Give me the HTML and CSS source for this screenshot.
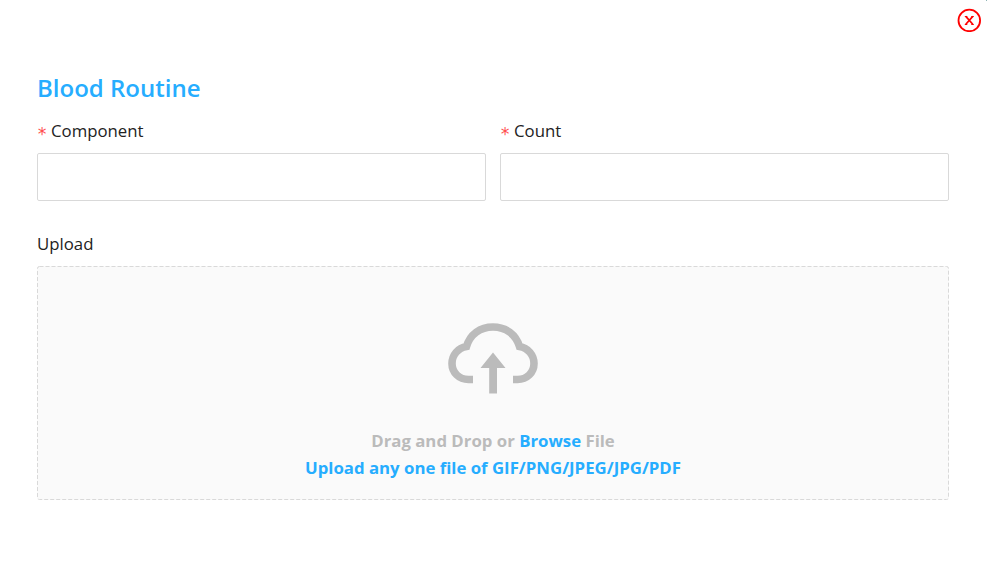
FILE: index.html
```
<!DOCTYPE html>
<html lang="en">
<head>
<meta charset="utf-8">
<title>Blood Routine</title>
<link rel="stylesheet" href="styles.css">
</head>
<body>
<div class="modal">
  <button class="close" aria-label="Close">
    <svg width="24" height="24" viewBox="0 0 24 24" fill="none" stroke="#ff0000">
      <circle cx="12.300" cy="12.400" r="10.800" stroke-width="1.800"/>
      <path d="M8.800 8.400L15.800 16.200M15.800 8.400L8.800 16.200" stroke-width="1.700"/>
      <path d="M7.800 8.500H10.300M14.300 8.500H16.800M7.800 16.500H10.300M14.300 16.500H16.800" stroke-width="1"/>
    </svg>
  </button>
  <form class="form">
    <h1 class="title">Blood Routine</h1>
    <div class="row">
      <div class="field">
        <label class="label" for="component"><span class="required">*</span>Component</label>
        <input class="input" id="component" type="text">
      </div>
      <div class="field">
        <label class="label" for="count"><span class="required">*</span>Count</label>
        <input class="input" id="count" type="text">
      </div>
    </div>
    <div class="label upload-label">Upload</div>
    <div class="dropzone">
      <svg class="border"><rect x="0.5" y="0.5" width="911" height="233" rx="2"/></svg>
      <svg class="cloud" width="90" height="72" viewBox="0 0 90 72">
        <path d="M25 56.500H20.500C11 56.500 4 49.500 4 40.500C4 32 10 25 18.500 23.500C22 11.500 32 4 45 4C58 4 68 11.500 71.500 23.500C80 25 86 32 86 40.500C86 49.500 79 56.500 69.500 56.500H65" fill="none" stroke="#bbb" stroke-width="7.600"/>
        <path d="M45 29.500L57.500 45H49V70.500H41.200V45H32.500Z" fill="#bbb"/>
      </svg>
      <p class="hint">Drag and Drop or <span class="browse">Browse</span> File</p>
      <p class="hint browse">Upload any one file of GIF/PNG/JPEG/JPG/PDF</p>
    </div>
  </form>
</div>
</body>
</html>
```
FILE: styles.css
```
* { box-sizing: border-box; }
body { margin: 0; background: #fff; color: #222; font: 16.8px/27px "Open Sans", sans-serif; }
.modal { position: relative; height: 566px; overflow: hidden; }
.modal::after { content: ""; position: absolute; top: 0; right: 0; width: 1px; height: 1px; background: #8fb5b5; }
.close { position: absolute; top: 8px; right: 6px; padding: 0; border: 0; background: none; width: 24px; height: 24px; }
.close svg { display: block; }
.form { padding: 71px 38px 0 37px; }
.title { margin: 0; font-size: 24px; line-height: 34px; font-weight: 600; color: #26adff; }
.row { display: grid; grid-template-columns: 1fr 1fr; gap: 14px; margin-top: 12px; }
.label { display: block; height: 36px; line-height: 28px; }
.required { position: relative; top: 3px; display: inline-block; width: 9px; height: 20px; margin-right: 5px; color: #ff4d4f; font: 17px/20px "DejaVu Sans Mono", monospace; }
.input { display: block; width: 100%; height: 48px; border: 1px solid #d9d9d9; border-radius: 2px; background: #fff; outline: 0; }
.upload-label { margin-top: 29px; }
.dropzone { position: relative; height: 234px; background: #fafafa; border-radius: 2px; text-align: center; padding-top: 57px; }
.border { position: absolute; inset: 0; width: 100%; height: 100%; }
.border rect { fill: none; stroke: #d9d9d9; stroke-dasharray: 4 2; }
.cloud { display: block; margin: 0 auto 32px; }
.hint { margin: 0; font-weight: 700; color: #bbb; }
.browse { color: #26adff; }
```
